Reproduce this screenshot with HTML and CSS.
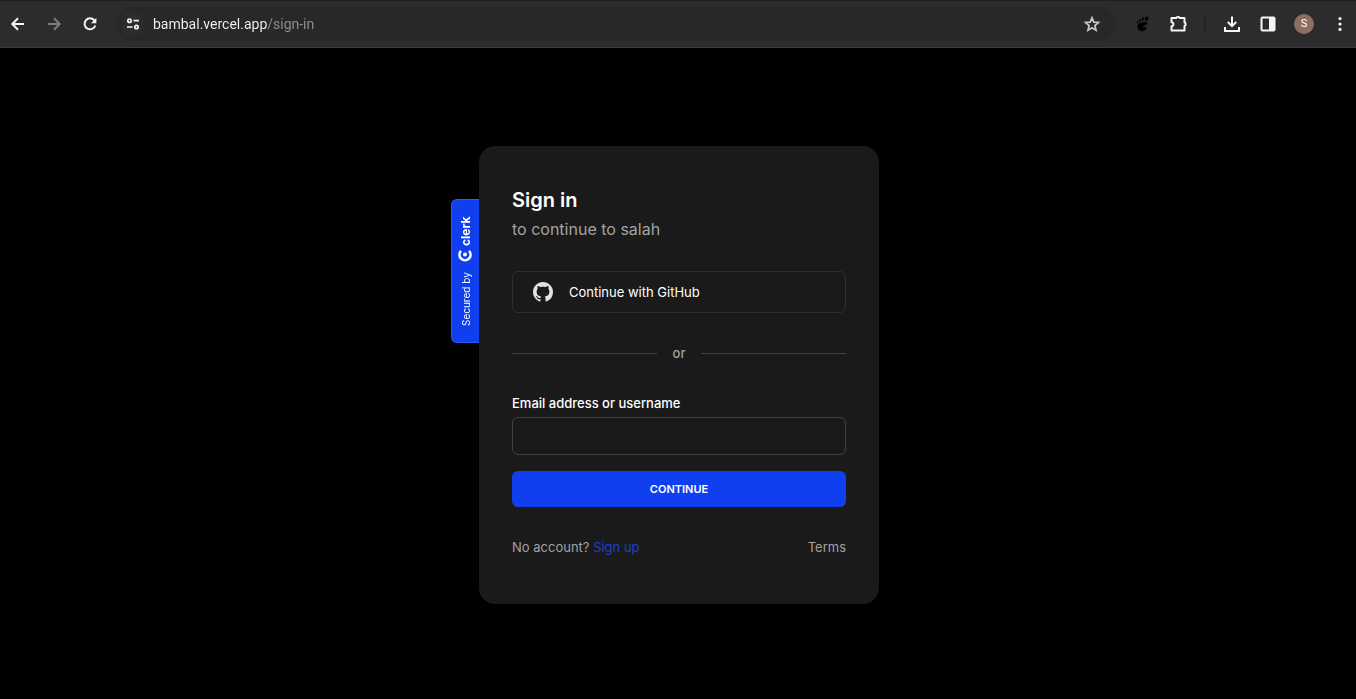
FILE: index.html
```html
<!DOCTYPE html>
<html lang="en">
<head>
<meta charset="utf-8">
<meta name="viewport" content="width=device-width, initial-scale=1">
<title>Sign in</title>
<link rel="stylesheet" href="styles.css">
</head>
<body>
<header class="toolbar">
  <nav class="nav-buttons" aria-label="Navigation">
    <button class="icon-button" aria-label="Back"><svg viewBox="0 0 20 20"><path d="M16 10H4.800M10 4.300 4.300 10 10 15.700"/></svg></button>
    <button class="icon-button icon-dim" aria-label="Forward"><svg viewBox="0 0 20 20"><path d="M4 10h11.200M10 4.300 15.700 10 10 15.700"/></svg></button>
    <button class="icon-button" aria-label="Reload"><svg viewBox="0 0 20 20"><path d="M14.300 6.300A5.500 5.500 0 1 0 15.300 11.500"/><path class="solid" d="M16.400 3.800v5.400H11z"/></svg></button>
  </nav>
  <div class="address-bar">
    <button class="site-info" aria-label="Site information"><svg viewBox="0 0 20 20"><circle cx="6.500" cy="6.700" r="1.700"/><path d="M10.500 6.700H16M4 13h5.500"/><circle cx="13.500" cy="13" r="1.700"/></svg></button>
    <input class="url" type="text" aria-label="Address" value="bambal.vercel.app/sign-in" spellcheck="false">
    <button class="icon-button icon-star" aria-label="Bookmark"><svg viewBox="0 0 20 20"><path d="m10 3.800 1.800 4.300 4.700.4-3.600 3.100 1.100 4.600-4-2.500-4 2.500 1.100-4.600-3.600-3.100 4.700-.4z"/></svg></button>
  </div>
  <div class="actions">
    <button class="icon-button icon-foot" aria-label="Extension"><svg viewBox="0 0 20 20"><ellipse cx="14.500" cy="4.700" rx="1.800" ry="2.300" transform="rotate(20 14.500 4.700)"/><ellipse cx="10.700" cy="5" rx="1.100" ry="1.700"/><ellipse cx="7.900" cy="6.300" rx=".9" ry="1.400"/><ellipse cx="5.600" cy="8" rx=".8" ry="1.200"/><path d="M14.500 8C10 7.500 5.400 9.200 5.400 12.300c0 3 2.300 4.900 4.800 4.900 2.400 0 4-1.300 4-3.100 0-1.300-1-1.800-1.800-1-.7.700-1.500.5-1.500-.4 0-1.700 4.300-1.700 4.400-3.500 0-.6-.2-1.100-.8-1.200z"/></svg></button>
    <button class="icon-button" aria-label="Extensions"><svg viewBox="0 0 20 20"><path stroke-linejoin="round" d="M3.500 4h4.700c.2-1.500 3.400-1.500 3.600 0h4.700v4.500c1.500.2 1.500 3.300 0 3.500v4.500h-13v-4.200c2.600-.4 2.600-3.700 0-4.100z"/></svg></button>
    <span class="separator"></span>
    <button class="icon-button" aria-label="Downloads"><svg viewBox="0 0 20 20"><path d="M10 2.500v9M5.800 8 10 12.200 14.200 8M3 13v4h14v-4"/></svg></button>
    <button class="icon-button" aria-label="Side panel"><svg viewBox="0 0 20 20"><rect x="3.500" y="3.500" width="13" height="13" rx="1"/><path class="solid" d="M11 3h5.500v14H11z"/></svg></button>
    <button class="avatar" aria-label="Profile">S</button>
    <button class="icon-button icon-menu" aria-label="Menu"><svg viewBox="0 0 20 20"><circle cx="10" cy="4.600" r="1.600"/><circle cx="10" cy="10" r="1.600"/><circle cx="10" cy="15.400" r="1.600"/></svg></button>
  </div>
</header>
<main class="page">
  <section class="card">
    <a class="clerk-badge" href="#clerk">
      <span>Secured by</span>
      <span class="clerk-brand"><svg viewBox="0 0 16 16"><path d="M12.600 3.400A6.300 6.300 0 1 0 12.600 12.600"/><circle cx="8.500" cy="8" r="2.300"/></svg>clerk</span>
    </a>
    <h1 class="title">Sign in</h1>
    <p class="subtitle">to continue to salah</p>
    <button class="github-button" type="button">
      <svg viewBox="0 0 16 16"><path d="M8 0C3.580 0 0 3.580 0 8c0 3.540 2.290 6.530 5.470 7.590.4.070.55-.17.55-.38 0-.19-.01-.82-.01-1.490-2.010.37-2.530-.49-2.690-.94-.09-.23-.48-.94-.82-1.130-.28-.15-.68-.52-.01-.53.63-.01 1.080.58 1.230.82.72 1.210 1.870.87 2.330.66.07-.52.28-.87.51-1.070-1.780-.2-3.640-.89-3.640-3.950 0-.87.31-1.590.82-2.150-.08-.2-.36-1.020.08-2.120 0 0 .67-.21 2.200.82.64-.18 1.320-.27 2-.27s1.360.09 2 .27c1.530-1.040 2.200-.82 2.200-.82.44 1.100.16 1.920.08 2.120.51.56.82 1.270.82 2.150 0 3.070-1.870 3.750-3.650 3.950.29.25.54.73.54 1.480 0 1.070-.01 1.930-.01 2.200 0 .21.15.46.55.38A8.010 8.010 0 0 0 16 8c0-4.420-3.580-8-8-8z"/></svg>
      Continue with GitHub
    </button>
    <div class="divider">or</div>
    <form class="form">
      <label class="label" for="identifier">Email address or username</label>
      <input class="field" id="identifier" type="text" name="identifier">
      <button class="submit" type="submit">CONTINUE</button>
    </form>
    <footer class="card-footer">
      <span>No account? <a class="signup" href="#sign-up">Sign up</a></span>
      <a class="terms" href="#terms">Terms</a>
    </footer>
  </section>
</main>
</body>
</html>
```
FILE: styles.css
```css
* { box-sizing: border-box; }

body {
  margin: 0;
  min-height: 100vh;
  display: flex;
  flex-direction: column;
  background: #000;
  color: #fff;
  font-family: Inter, "Liberation Sans", sans-serif;
}

button, input { font: inherit; color: inherit; }
button { border: 0; padding: 0; background: none; cursor: pointer; }
a { color: inherit; text-decoration: none; }

.toolbar {
  display: flex;
  align-items: center;
  height: 48px;
  padding: 0 6px 0 8px;
  background: #2c2c2c;
  border-top: 1px solid #1f1f1f;
  border-bottom: 1px solid #3a3a3a;
}

.nav-buttons { display: flex; gap: 16px; }

.icon-button { width: 20px; height: 20px; flex: none; }
.icon-button svg, .site-info svg {
  display: block;
  width: 20px;
  height: 20px;
  fill: none;
  stroke: #f5f5f5;
  stroke-width: 2;
}
.icon-button .solid { fill: #f5f5f5; stroke: none; }
.icon-dim svg { stroke: #7b7b7b; }
.icon-star svg { stroke: #c7c7c7; stroke-width: 1.700; }
.icon-foot svg { fill: #000; stroke: none; }
.icon-menu svg { fill: #f5f5f5; stroke: none; }

.address-bar {
  display: flex;
  align-items: center;
  flex: 1;
  height: 34px;
  margin: 0 16px;
  padding: 0 14px 0 5px;
  border-radius: 17px;
  background: #282828;
}

.site-info {
  display: flex;
  align-items: center;
  justify-content: center;
  width: 24px;
  height: 24px;
  border-radius: 50%;
  background: #2c2c2c;
}
.site-info svg { stroke-width: 1.700; }

.url {
  flex: 1;
  min-width: 0;
  margin-left: 8px;
  padding: 0;
  border: 0;
  outline: 0;
  font: 14px/20px Roboto, "Noto Sans", sans-serif;
  color: transparent;
  background: linear-gradient(to right, #f5f5f5 114px, #8f8f8f 114px);
  background-clip: text;
  -webkit-background-clip: text;
}

.actions { display: flex; align-items: center; gap: 16px; }
.separator { width: 2px; height: 16px; background: #222; }

.avatar {
  width: 20px;
  height: 20px;
  border-radius: 50%;
  background: #8d6e63;
  font: 11px/20px Roboto, sans-serif;
}

.page {
  flex: 1;
  display: flex;
  align-items: center;
  justify-content: center;
  padding: 3px 0 0 2px;
}

.card {
  position: relative;
  width: 100%;
  max-width: 400px;
  padding: 40px 33px 49px;
  border-radius: 16px;
  background: #1a1a1a;
}

.clerk-badge {
  position: absolute;
  top: 53px;
  right: 100%;
  display: flex;
  align-items: center;
  justify-content: center;
  gap: 10px;
  width: 28px;
  height: 144px;
  border: 1px solid #3158f2;
  border-left: 0;
  border-radius: 0 6px 6px 0;
  background: #103ff0;
  font-size: 10px;
  writing-mode: vertical-rl;
  transform: rotate(180deg);
}

.clerk-brand {
  display: flex;
  align-items: center;
  gap: 2px;
  font-size: 12px;
  font-weight: 700;
}
.clerk-brand svg {
  width: 14px;
  height: 14px;
  fill: none;
  stroke: #fff;
  stroke-width: 3;
  transform: rotate(90deg);
}
.clerk-brand circle { fill: #fff; stroke: none; }

.title { margin: 0; font-size: 20px; line-height: 28px; font-weight: 600; }
.subtitle { margin: 0; font-size: 16px; line-height: 30px; color: #a3a3a3; }

.github-button {
  display: flex;
  align-items: center;
  gap: 16px;
  width: 100%;
  height: 42px;
  margin-top: 27px;
  padding: 0 20px;
  border: 1px solid #2f2f2f;
  border-radius: 6px;
  font-size: 13px;
}
.github-button svg { width: 20px; height: 20px; fill: #e4e2dc; }

.divider {
  display: flex;
  align-items: center;
  gap: 16px;
  margin: 32px 0;
  font-size: 13px;
  line-height: 16px;
  font-weight: 500;
  color: #a3a3a3;
}
.divider::before, .divider::after {
  content: "";
  flex: 1;
  height: 1px;
  background: #404040;
}

.form { display: flex; flex-direction: column; }
.label { font-size: 13px; line-height: 20px; font-weight: 500; }

.field {
  height: 38px;
  margin: 4px 0 16px;
  padding: 0 12px;
  border: 1px solid #424242;
  border-radius: 6px;
  background: transparent;
  font-size: 13px;
}

.submit {
  height: 36px;
  border-radius: 6px;
  background: #103ff0;
  font-size: 11px;
  font-weight: 600;
}

.card-footer {
  display: flex;
  justify-content: space-between;
  margin-top: 32px;
  font-size: 13px;
  line-height: 16px;
  color: #a3a3a3;
}
.signup { color: #1d3fd0; }
```
